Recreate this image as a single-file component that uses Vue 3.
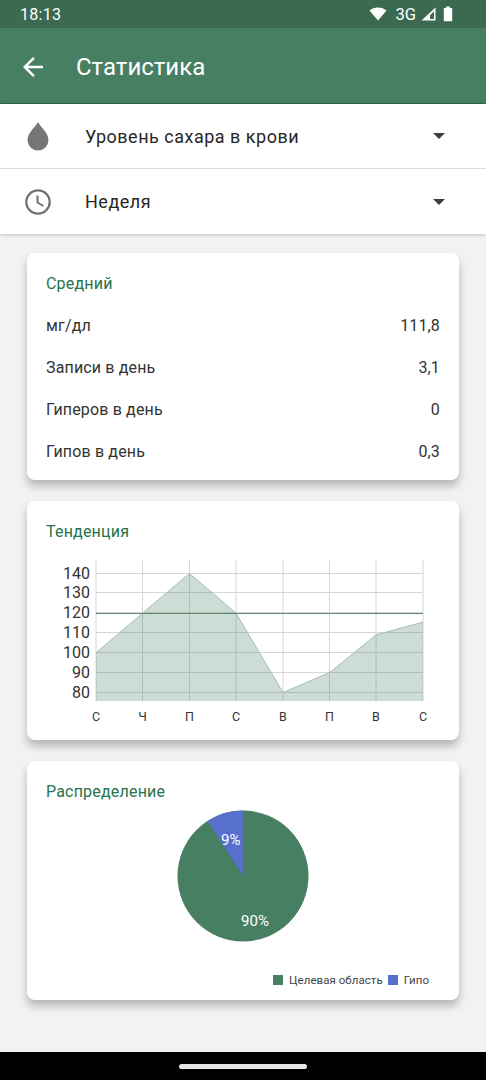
<template>
  <div class="screen">
    <div class="status-bar">
      <span class="time">18:13</span>
      <div class="status-icons">
        <svg class="wifi" width="18" height="14" viewBox="0 0 18 14"><path d="M0.5 3.6C2.8 1.6 5.7 0.5 9 0.5s6.2 1.1 8.5 3.1L9 13.5z" fill="#fff" /></svg>
        <span class="net">3G</span>
        <svg class="signal" width="15" height="14" viewBox="0 0 15 14"><path d="M14.500 0.5V13.500H0.5zM13 4.200 9 8.200V12H13z" fill="#fff" fill-rule="evenodd" /></svg>
        <svg class="battery" width="10" height="16" viewBox="0 0 10 16"><path d="M3 1.400C3 .9 3.300.6 3.800.6h2.400c.5 0 .8.3.8.8v.7h1.200c.6 0 1 .4 1 1v11.100c0 .6-.4 1-1 1H1.800c-.6 0-1-.4-1-1V3.100c0-.6.4-1 1-1H3z" fill="#fff" /></svg>
      </div>
    </div>

    <header class="app-bar">
      <svg class="back" width="30" height="30" viewBox="0 0 24 24"><path d="M20 11H7.830l5.590-5.590L12 4l-8 8 8 8 1.410-1.410L7.830 13H20z" fill="#fff" /></svg>
      <h1>Статистика</h1>
    </header>

    <section class="filters">
      <div v-for="f in filters" :key="f.label" class="filter">
        <div class="filter-icon">
          <svg v-if="f.icon === 'drop'" width="24" height="30" viewBox="0 0 24 30"><path d="M12 1C10 5.500 1.500 11.500 1.500 19a10.500 10.500 0 0 0 21 0C22.500 11.500 14 5.500 12 1z" fill="#767676" /></svg>
          <svg v-else width="28" height="28" viewBox="0 0 28 28"><circle cx="14" cy="14" r="11.700" fill="none" stroke="#6f6f6f" stroke-width="2.200" /><path d="M13.500 7.500V14.500L19.500 18" fill="none" stroke="#6f6f6f" stroke-width="2" /></svg>
        </div>
        <span class="filter-label">{{ f.label }}</span>
        <span class="caret"></span>
      </div>
    </section>

    <main class="cards">
      <section class="card average">
        <h2>Средний</h2>
        <div v-for="r in averages" :key="r.label" class="stat-row">
          <span>{{ r.label }}</span>
          <span>{{ r.value }}</span>
        </div>
      </section>

      <section class="card trend">
        <h2>Тенденция</h2>
        <svg class="chart" width="432" height="176" viewBox="0 0 432 176">
          <g stroke="#d6d6d6" stroke-width="1">
            <line v-for="t in yTicks" :key="t.label" x1="69" x2="396" :y1="t.y" :y2="t.y" />
            <line v-for="x in xGrid" :key="x" :x1="x" :x2="x" y1="0" y2="141" />
          </g>
          <polygon :points="areaPoints" fill="#477f63" fill-opacity="0.27" />
          <polyline :points="linePoints" fill="none" stroke="#a3bfb0" stroke-width="1" />
          <line x1="69" x2="396" y1="53.500" y2="53.500" stroke="#5d8a72" stroke-width="1" />
          <text v-for="t in yTicks" :key="t.label" class="y-label" x="63" :y="t.y + 5.500" text-anchor="end">{{ t.label }}</text>
          <text v-for="(d, i) in days" :key="i" class="x-label" :x="xGrid[i]" y="161" text-anchor="middle">{{ d }}</text>
        </svg>
      </section>

      <section class="card distribution">
        <h2>Распределение</h2>
        <div class="pie-wrap">
          <svg width="132" height="132" viewBox="0 0 132 132">
            <circle cx="66" cy="66" r="65.500" fill="#477f63" />
            <path d="M66 66V.5A65.500 65.500 0 0 0 30.600 10.900z" fill="#5870cd" />
            <text class="pie-label" x="44" y="35">9%</text>
            <text class="pie-label" x="78" y="116" text-anchor="middle">90%</text>
          </svg>
        </div>
        <div class="legend">
          <span class="swatch green"></span><span class="legend-text">Целевая область</span>
          <span class="swatch blue"></span><span class="legend-text">Гипо</span>
        </div>
      </section>
    </main>

    <footer class="nav-bar"><span class="pill"></span></footer>
  </div>
</template>

<script setup>
import { computed } from 'vue'

const filters = [
  { icon: 'drop', label: 'Уровень сахара в крови' },
  { icon: 'clock', label: 'Неделя' }
]

const averages = [
  { label: 'мг/дл', value: '111,8' },
  { label: 'Записи в день', value: '3,1' },
  { label: 'Гиперов в день', value: '0' },
  { label: 'Гипов в день', value: '0,3' }
]

const days = ['С', 'Ч', 'П', 'С', 'В', 'П', 'В', 'С']
const xGrid = [69, 115.5, 162.5, 209, 256, 302.5, 349, 396]
const values = [100, 120, 140, 120, 80, 90, 109, 115.500]

// 140 sits at y=13, 80 at y=132 inside the svg
const toY = (v) => 13.500 + (140 - v) * (119 / 60)

const yTicks = [140, 130, 120, 110, 100, 90, 80].map((v) => ({
  label: String(v),
  y: Math.round(toY(v)) - 0.5
}))

const linePoints = computed(() => values.map((v, i) => `${xGrid[i]},${toY(v)}`).join(' '))
const areaPoints = computed(() => `69,141 ${linePoints.value} 396,141`)
</script>

<style>
html, body {
  margin: 0;
  background: #f2f2f2;
}
</style>

<style scoped>
.screen {
  width: 486px;
  height: 1080px;
  display: flex;
  flex-direction: column;
  background: #f2f2f2;
  font-family: Roboto, "Liberation Sans", sans-serif;
  overflow: hidden;
}

.status-bar {
  height: 28px;
  flex: none;
  display: flex;
  align-items: center;
  justify-content: space-between;
  padding: 0 33px 0 20px;
  background: #3b6a50;
  color: #fff;
}

.time {
  font-size: 16px;
  letter-spacing: 0.3px;
}

.status-icons {
  display: flex;
  align-items: center;
}

.net {
  font-size: 16.500px;
  margin-left: 8px;
}

.signal {
  margin-left: 5px;
}

.battery {
  margin-left: 7px;
}

.app-bar {
  height: 76px;
  flex: none;
  display: flex;
  align-items: center;
  padding: 2px 0 0 18px;
  box-sizing: border-box;
  background: #477f63;
  border-bottom: 1px solid #2f6d4d;
}

.app-bar h1 {
  margin: 0 0 0 28px;
  font-size: 24px;
  font-weight: 400;
  color: #fff;
}

.filters {
  flex: none;
  background: #fff;
  box-shadow: 0 1px 4px rgba(0, 0, 0, 0.2);
}

.filter {
  height: 64px;
  display: flex;
  align-items: center;
  padding-right: 41px;
}

.filter + .filter {
  height: 65px;
  border-top: 1px solid #dcdcdc;
}

.filter-icon {
  width: 85px;
  flex: none;
  display: flex;
  justify-content: center;
  padding-right: 9px;
  box-sizing: border-box;
}

.filter-label {
  flex: 1;
  font-size: 18px;
  letter-spacing: 0.5px;
  color: #262626;
}

.caret {
  width: 0;
  height: 0;
  border-left: 6px solid transparent;
  border-right: 6px solid transparent;
  border-top: 6px solid #3d3d47;
}

.cards {
  flex: 1;
  display: flex;
  flex-direction: column;
  gap: 21px;
  padding: 19px 27px 0;
}

.card {
  box-sizing: border-box;
  background: #fff;
  border-radius: 8px;
  box-shadow: 0 6px 8px rgba(0, 0, 0, 0.25);
}

.card h2 {
  margin: 0;
  font-size: 16px;
  font-weight: 400;
  line-height: 20px;
  letter-spacing: 0.2px;
  color: #26734d;
}

.average {
  height: 227px;
  padding: 21px 19px 0;
}

.stat-row {
  height: 42px;
  display: flex;
  align-items: center;
  justify-content: space-between;
  font-size: 16px;
  letter-spacing: 0.15px;
  color: #333;
}

.average h2 {
  margin-bottom: 10px;
}

.trend {
  height: 239px;
  padding-top: 21px;
}

.trend h2,
.distribution h2 {
  padding-left: 19px;
}

.chart {
  display: block;
  margin-top: 18px;
}

.y-label {
  font-size: 16px;
  fill: #333;
}

.x-label {
  font-size: 12.500px;
  fill: #333;
}

.distribution {
  height: 239px;
  padding-top: 21px;
}

.pie-wrap {
  display: flex;
  justify-content: center;
  margin-top: 8px;
}

.pie-wrap svg {
  display: block;
}

.pie-label {
  font-size: 15px;
  fill: #fff;
}

.legend {
  display: flex;
  align-items: center;
  justify-content: flex-end;
  margin-top: 31px;
  padding-right: 30px;
  font-size: 11.500px;
  letter-spacing: 0.05px;
  color: #444;
}

.swatch {
  width: 10px;
  height: 10px;
  margin-right: 6px;
}

.swatch.green {
  background: #477f63;
}

.swatch.blue {
  background: #5870cd;
  margin-left: 5px;
  margin-right: 6px;
}

.nav-bar {
  height: 28px;
  flex: none;
  display: flex;
  align-items: center;
  justify-content: center;
  background: #000;
}

.pill {
  width: 128px;
  height: 5px;
  border-radius: 3px;
  background: #e6e6e6;
}
</style>
